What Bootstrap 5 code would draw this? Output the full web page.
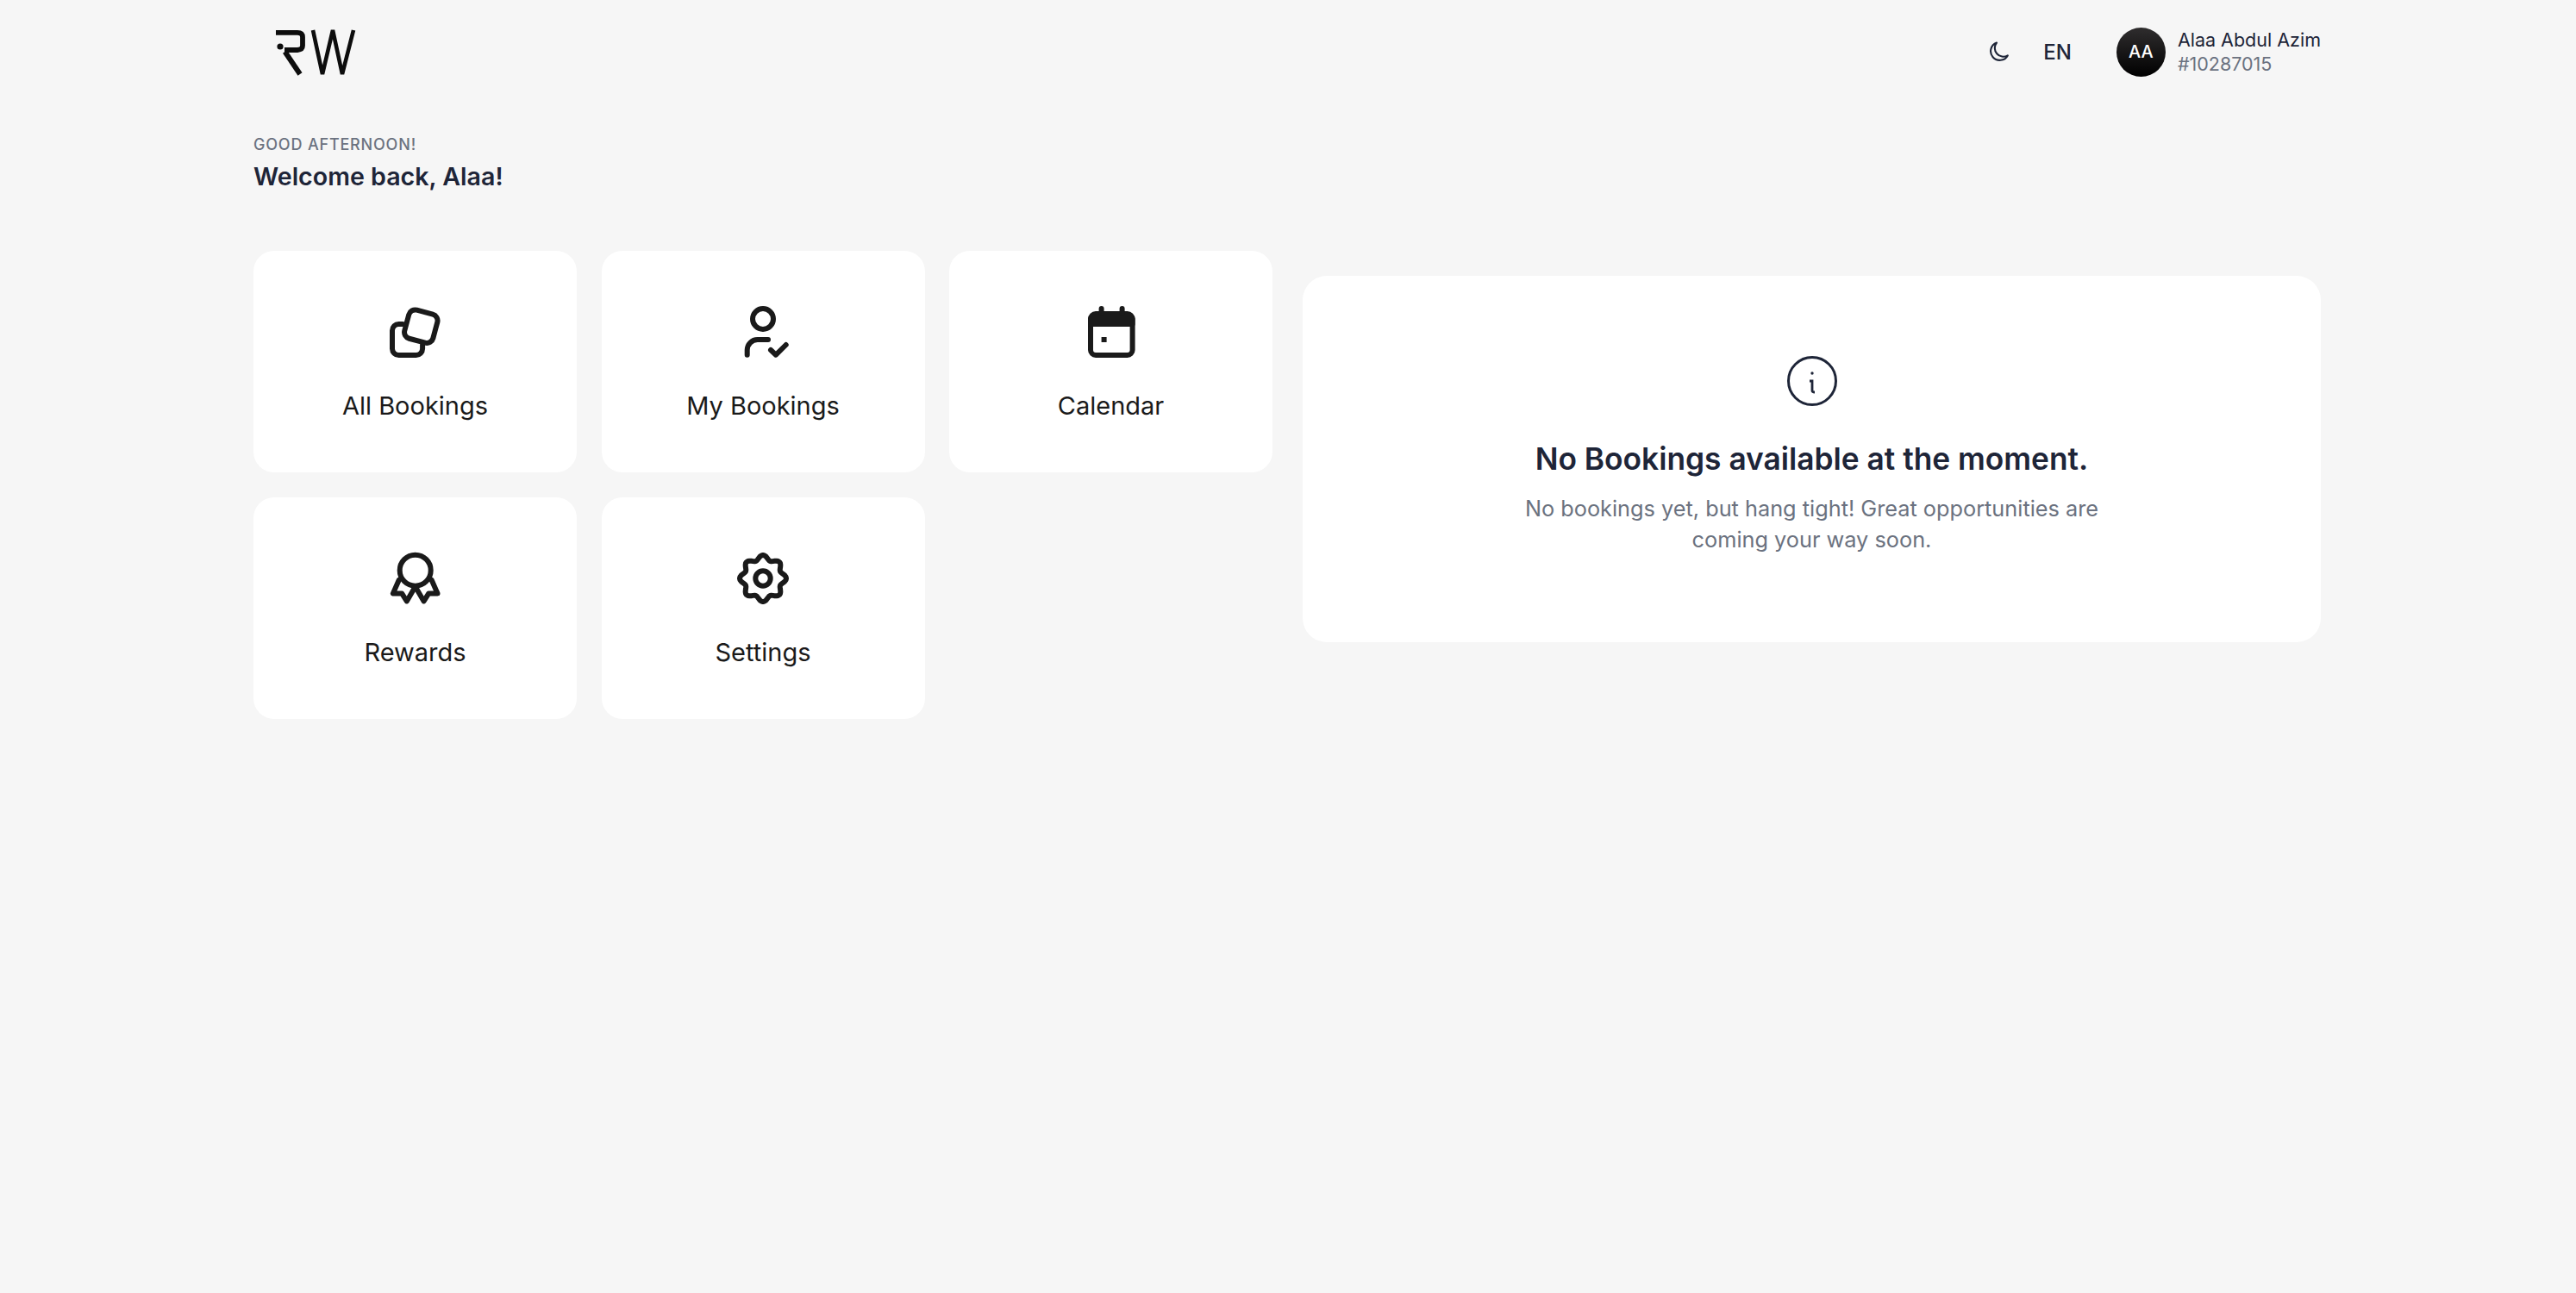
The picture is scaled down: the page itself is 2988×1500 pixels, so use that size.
<!DOCTYPE html>
<html lang="en">
<head>
  <meta charset="UTF-8" />
  <meta name="viewport" content="width=device-width, initial-scale=1.0"/>
  <title>Dashboard</title>
  <link href="https://cdn.jsdelivr.net/npm/bootstrap@5.3.0/dist/css/bootstrap.min.css" rel="stylesheet"/>
  <style>
    body { font-family: Inter, "Liberation Sans", sans-serif; background: #f6f6f6; color: #1e2538; }
    .page-shell { width: 2398px; margin: 0 auto 0 294px; }
    .top-bar { height: 120px; padding: 0; }
    .brand-logo { margin-left: 24px; display: block; }
    .moon-icon { width: 24px; height: 24px; margin-right: 40px; }
    .lang-label { font-size: 24px; font-weight: 500; margin-right: 52px; padding-top: 1px; }
    .avatar-circle { width: 57px; height: 57px; border-radius: 50%; background: linear-gradient(#2f2d2e, #000); color: #fff; font-size: 20px; font-weight: 500; margin-right: 14px; }
    .user-name { font-size: 21.5px; line-height: 28px; }
    .user-id { font-size: 21.5px; line-height: 28px; color: #6b7280; }
    .greet-small { font-size: 18px; line-height: 28px; font-weight: 500; letter-spacing: 0.045em; color: #6b7280; margin-top: 34px; }
    .greet-big { font-size: 28.6px; line-height: 44px; font-weight: 600; margin-top: 1px; margin-bottom: 64px; }
    .tile-grid { display: grid; grid-template-columns: repeat(3, 375px); grid-auto-rows: 257px; gap: 29px 28.5px; }
    .tile-card { border: 0; border-radius: 24px; background: #fff; padding-top: 58px; color: #1a1a1a; }
    .tile-card svg { width: 72px; height: 72px; display: block; margin: 0 auto 32px; }
    .tile-label { font-size: 29px; line-height: 36px; text-align: center; }
    .empty-card { width: 1181px; height: 425px; margin: 29px 0 0 35px; border: 0; border-radius: 28px; background: #fff; padding-top: 92px; }
    .empty-card svg { display: block; width: 60px; height: 60px; margin: 0 auto 35px; }
    .empty-title { font-size: 35.3px; line-height: 52px; font-weight: 600; text-align: center; margin-bottom: 13px; }
    .empty-text { font-size: 25.3px; line-height: 36px; color: #6b7280; text-align: center; width: 700px; margin: 0 auto; }
  </style>
</head>
<body>

<div class="page-shell">
  <nav class="navbar top-bar">
    <svg class="brand-logo" width="96" height="55" viewBox="0 0 96 55" fill="none" stroke="#0d0d0d">
      <path d="M2 4.8H27Q33 4.8 33 10V20Q33 24.5 27 25H12" stroke-width="5.8"/>
      <path d="M12.5 27L30 53" stroke-width="6"/>
      <circle cx="7" cy="21" r="3.6" fill="#0d0d0d" stroke="none"/>
      <path d="M45 2L56 53L68 2L79 53L92 2" stroke-width="4.6" stroke-linejoin="bevel"/>
    </svg>
    <div class="d-flex align-items-center">
      <svg class="moon-icon" viewBox="0 0 24 24" fill="none" stroke="#1e2538" stroke-width="2.1" stroke-linecap="round" stroke-linejoin="round">
        <path d="M10 1.5A10.5 10.5 0 1 0 22.8 16.4 10 10 0 0 1 10 1.5Z"/>
      </svg>
      <span class="lang-label">EN</span>
      <div class="avatar-circle d-flex align-items-center justify-content-center">AA</div>
      <div>
        <div class="user-name">Alaa Abdul Azim</div>
        <div class="user-id">#10287015</div>
      </div>
    </div>
  </nav>

  <div class="greet-small">GOOD AFTERNOON!</div>
  <div class="greet-big">Welcome back, Alaa!</div>

  <div class="d-flex align-items-start">
    <div class="tile-grid">
      <div class="card tile-card">
        <svg viewBox="0 0 24 24" fill="none" stroke="#1a1a1a" stroke-width="2" stroke-linecap="round" stroke-linejoin="round">
          <path d="M7 9H5.5A2.5 2.5 0 0 0 3 11.5V18.5A2.5 2.5 0 0 0 5.5 21H12.2A2.5 2.5 0 0 0 14.7 18.5V17"/>
          <rect x="8.4" y="4.2" width="11.4" height="11.4" rx="2.5" transform="rotate(15 14.1 9.9)"/>
        </svg>
        <div class="tile-label">All Bookings</div>
      </div>
      <div class="card tile-card">
        <svg viewBox="0 0 24 24" fill="none" stroke="#1a1a1a" stroke-width="2" stroke-linecap="round" stroke-linejoin="round">
          <circle cx="12" cy="7" r="4"/>
          <path d="M5.9 20.9V19A4 4 0 0 1 9.9 15H14"/>
          <path d="M15 19L17 20.9L20.9 17"/>
        </svg>
        <div class="tile-label">My Bookings</div>
      </div>
      <div class="card tile-card">
        <svg viewBox="0 0 24 24" fill="none" stroke="#1a1a1a" stroke-width="2" stroke-linecap="round" stroke-linejoin="round">
          <rect x="4" y="5" width="16.2" height="16" rx="2"/>
          <path d="M4 7H20.2V9H4Z" fill="#1a1a1a"/>
          <path d="M8.2 3V5M16.2 3V5"/>
          <rect x="8.2" y="14" width="2" height="2" fill="#1a1a1a" stroke="none"/>
        </svg>
        <div class="tile-label">Calendar</div>
      </div>
      <div class="card tile-card">
        <svg viewBox="0 0 24 24" fill="none" stroke="#1a1a1a" stroke-width="2" stroke-linecap="round" stroke-linejoin="round">
          <circle cx="11.9" cy="8.9" r="6"/>
          <path d="M5.6 12.6L3.3 17.8H6.7L8.6 20.8L11.9 15.2L15.2 20.8L17.1 17.8H20.5L18.2 12.6"/>
        </svg>
        <div class="tile-label">Rewards</div>
      </div>
      <div class="card tile-card">
        <svg viewBox="0 0 24 24" fill="none" stroke="#1a1a1a" stroke-width="2" stroke-linejoin="round">
          <path id="gearPath"/>
          <circle cx="12" cy="12" r="2.9"/>
        </svg>
        <div class="tile-label">Settings</div>
      </div>
    </div>

    <div class="card empty-card">
      <svg viewBox="0 0 60 60" fill="none" stroke="#1e2538">
        <circle cx="30" cy="30" r="27.5" stroke-width="3"/>
        <circle cx="30" cy="21" r="1.7" fill="#1e2538" stroke="none"/>
        <path d="M27 30H30V41Q30 43 33 43" stroke-width="2.8"/>
      </svg>
      <div class="empty-title">No Bookings available at the moment.</div>
      <p class="empty-text">No bookings yet, but hang tight! Great opportunities are coming your way soon.</p>
    </div>
  </div>
</div>

<script>
  // wavy outline of the gear, 8 lobes
  const pts = [];
  for (let i = 0; i < 96; i++) {
    const a = i / 96 * Math.PI * 2;
    const r = 8.1 + 0.9 * Math.cos(8 * a);
    pts.push((12 + r * Math.sin(a)).toFixed(2) + " " + (12 - r * Math.cos(a)).toFixed(2));
  }
  document.getElementById("gearPath").setAttribute("d", "M" + pts.join("L") + "Z");
</script>
<script src="https://cdn.jsdelivr.net/npm/bootstrap@5.3.0/dist/js/bootstrap.bundle.min.js"></script>
</body>
</html>
